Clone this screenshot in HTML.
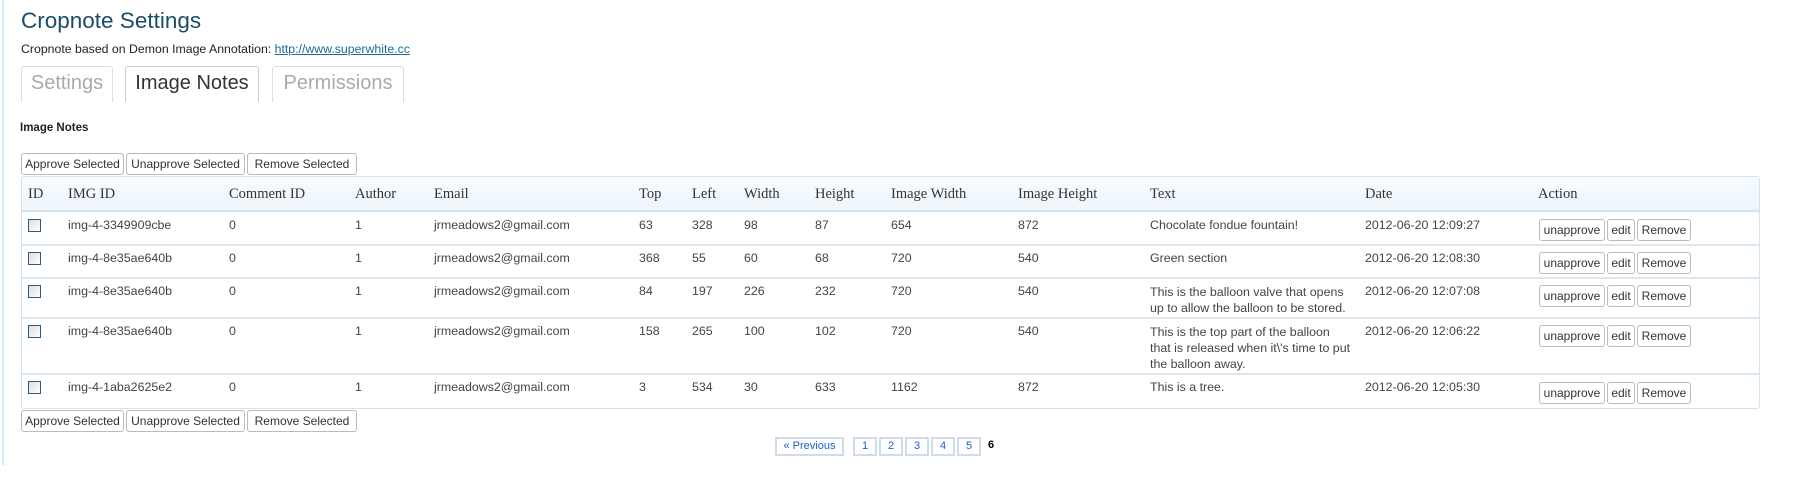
<!DOCTYPE html>
<html><head><meta charset="utf-8"><style>
*{margin:0;padding:0;box-sizing:border-box}
body{width:1800px;height:500px;background:#fff;position:relative;overflow:hidden;font-family:"Liberation Sans",Arial,sans-serif;color:#333}
.a{position:absolute;white-space:nowrap}
.lb{position:absolute;left:2px;top:0;width:2px;height:465px;background:#d8e8f3}
h1{position:absolute;left:21px;top:8px;font-size:22.5px;font-weight:normal;color:#1b4b68}
.sub{left:21px;top:42px;font-size:12.3px;color:#222}
.sub a{color:#1a6a9a;text-decoration:underline}
.tab{position:absolute;top:66px;height:36px;border:1px solid #ddd;border-bottom:none;border-radius:3px 3px 0 0;font-size:20px;text-align:center;line-height:33px;color:#aaa;background:#fff}
.btn{position:absolute;height:22px;border:1px solid #bbb;border-radius:3px;font-size:12px;line-height:20px;text-align:center;color:#333;background:#fff;white-space:nowrap}
.tbl{position:absolute;left:21px;top:176px;width:1739px;height:233px;border:1px solid #d3e3ee;border-radius:3px}
.hd{position:absolute;left:22px;top:177px;width:1737px;height:35px;background:linear-gradient(#f7fbfe,#eef6fc);border-bottom:2px solid #d3e3ee}
.hl{position:absolute;left:22px;width:1737px;height:2px;background:#dce8f0}
.h{position:absolute;top:186px;font-family:"Liberation Serif",serif;font-size:14.5px;color:#333;white-space:nowrap}
.c{position:absolute;font-size:12.4px;color:#444;white-space:nowrap;line-height:14px}
.cb{position:absolute;left:28px;width:13px;height:13px;border:1px solid #2b5a86;background:linear-gradient(135deg,#ddd,#fff)}
.pg{position:absolute;top:437px;height:19px;border:2px solid #d0dde8;font-size:11px;color:#1a5fcf;text-align:center;line-height:15px}
</style></head><body>
<div class="lb"></div>
<h1>Cropnote Settings</h1>
<div class="a sub">Cropnote based on Demon Image Annotation: <a>http://www.superwhite.cc</a></div>
<div class="tab" style="left:21px;width:92px">Settings</div>
<div class="tab" style="left:125px;width:134px;color:#333;border-color:#ccc">Image Notes</div>
<div class="tab" style="left:272px;width:132px">Permissions</div>
<div class="a" style="left:20px;top:122px;font-size:11.5px;font-weight:bold;color:#222">Image Notes</div>

<div class="btn" style="left:21px;top:153px;width:103px">Approve Selected</div>
<div class="btn" style="left:126px;top:153px;width:119px">Unapprove Selected</div>
<div class="btn" style="left:247px;top:153px;width:110px">Remove Selected</div>

<div class="tbl"></div>
<div class="hd"></div>
<div class="h" style="left:28px">ID</div>
<div class="h" style="left:68px">IMG ID</div>
<div class="h" style="left:229px">Comment ID</div>
<div class="h" style="left:355px">Author</div>
<div class="h" style="left:434px">Email</div>
<div class="h" style="left:639px">Top</div>
<div class="h" style="left:692px">Left</div>
<div class="h" style="left:744px">Width</div>
<div class="h" style="left:815px">Height</div>
<div class="h" style="left:891px">Image Width</div>
<div class="h" style="left:1018px">Image Height</div>
<div class="h" style="left:1150px">Text</div>
<div class="h" style="left:1365px">Date</div>
<div class="h" style="left:1538px">Action</div>

<div class="hl" style="top:244px"></div>
<div class="hl" style="top:277px"></div>
<div class="hl" style="top:317px"></div>
<div class="hl" style="top:373px"></div>

<div class="cb" style="top:219px"></div>
<div class="c" style="left:68px;top:218px">img-4-3349909cbe</div>
<div class="c" style="left:229px;top:218px">0</div><div class="c" style="left:355px;top:218px">1</div>
<div class="c" style="left:434px;top:218px">jrmeadows2@gmail.com</div>
<div class="c" style="left:639px;top:218px">63</div><div class="c" style="left:692px;top:218px">328</div>
<div class="c" style="left:744px;top:218px">98</div><div class="c" style="left:815px;top:218px">87</div>
<div class="c" style="left:891px;top:218px">654</div><div class="c" style="left:1018px;top:218px">872</div>
<div class="c" style="left:1150px;top:218px">Chocolate fondue fountain!</div>
<div class="c" style="left:1365px;top:218px">2012-06-20 12:09:27</div>
<div class="btn" style="left:1539px;top:219px;width:66px">unapprove</div><div class="btn" style="left:1607px;top:219px;width:28px">edit</div><div class="btn" style="left:1637px;top:219px;width:54px">Remove</div>

<div class="cb" style="top:252px"></div>
<div class="c" style="left:68px;top:251px">img-4-8e35ae640b</div>
<div class="c" style="left:229px;top:251px">0</div><div class="c" style="left:355px;top:251px">1</div>
<div class="c" style="left:434px;top:251px">jrmeadows2@gmail.com</div>
<div class="c" style="left:639px;top:251px">368</div><div class="c" style="left:692px;top:251px">55</div>
<div class="c" style="left:744px;top:251px">60</div><div class="c" style="left:815px;top:251px">68</div>
<div class="c" style="left:891px;top:251px">720</div><div class="c" style="left:1018px;top:251px">540</div>
<div class="c" style="left:1150px;top:251px">Green section</div>
<div class="c" style="left:1365px;top:251px">2012-06-20 12:08:30</div>
<div class="btn" style="left:1539px;top:252px;width:66px">unapprove</div><div class="btn" style="left:1607px;top:252px;width:28px">edit</div><div class="btn" style="left:1637px;top:252px;width:54px">Remove</div>

<div class="cb" style="top:285px"></div>
<div class="c" style="left:68px;top:284px">img-4-8e35ae640b</div>
<div class="c" style="left:229px;top:284px">0</div><div class="c" style="left:355px;top:284px">1</div>
<div class="c" style="left:434px;top:284px">jrmeadows2@gmail.com</div>
<div class="c" style="left:639px;top:284px">84</div><div class="c" style="left:692px;top:284px">197</div>
<div class="c" style="left:744px;top:284px">226</div><div class="c" style="left:815px;top:284px">232</div>
<div class="c" style="left:891px;top:284px">720</div><div class="c" style="left:1018px;top:284px">540</div>
<div class="c" style="left:1150px;top:284px;line-height:16px">This is the balloon valve that opens<br>up to allow the balloon to be stored.</div>
<div class="c" style="left:1365px;top:284px">2012-06-20 12:07:08</div>
<div class="btn" style="left:1539px;top:285px;width:66px">unapprove</div><div class="btn" style="left:1607px;top:285px;width:28px">edit</div><div class="btn" style="left:1637px;top:285px;width:54px">Remove</div>

<div class="cb" style="top:325px"></div>
<div class="c" style="left:68px;top:324px">img-4-8e35ae640b</div>
<div class="c" style="left:229px;top:324px">0</div><div class="c" style="left:355px;top:324px">1</div>
<div class="c" style="left:434px;top:324px">jrmeadows2@gmail.com</div>
<div class="c" style="left:639px;top:324px">158</div><div class="c" style="left:692px;top:324px">265</div>
<div class="c" style="left:744px;top:324px">100</div><div class="c" style="left:815px;top:324px">102</div>
<div class="c" style="left:891px;top:324px">720</div><div class="c" style="left:1018px;top:324px">540</div>
<div class="c" style="left:1150px;top:324px;line-height:16px">This is the top part of the balloon<br>that is released when it\'s time to put<br>the balloon away.</div>
<div class="c" style="left:1365px;top:324px">2012-06-20 12:06:22</div>
<div class="btn" style="left:1539px;top:325px;width:66px">unapprove</div><div class="btn" style="left:1607px;top:325px;width:28px">edit</div><div class="btn" style="left:1637px;top:325px;width:54px">Remove</div>

<div class="cb" style="top:381px"></div>
<div class="c" style="left:68px;top:380px">img-4-1aba2625e2</div>
<div class="c" style="left:229px;top:380px">0</div><div class="c" style="left:355px;top:380px">1</div>
<div class="c" style="left:434px;top:380px">jrmeadows2@gmail.com</div>
<div class="c" style="left:639px;top:380px">3</div><div class="c" style="left:692px;top:380px">534</div>
<div class="c" style="left:744px;top:380px">30</div><div class="c" style="left:815px;top:380px">633</div>
<div class="c" style="left:891px;top:380px">1162</div><div class="c" style="left:1018px;top:380px">872</div>
<div class="c" style="left:1150px;top:380px">This is a tree.</div>
<div class="c" style="left:1365px;top:380px">2012-06-20 12:05:30</div>
<div class="btn" style="left:1539px;top:382px;width:66px">unapprove</div><div class="btn" style="left:1607px;top:382px;width:28px">edit</div><div class="btn" style="left:1637px;top:382px;width:54px">Remove</div>

<div class="btn" style="left:21px;top:410px;width:103px">Approve Selected</div>
<div class="btn" style="left:126px;top:410px;width:119px">Unapprove Selected</div>
<div class="btn" style="left:247px;top:410px;width:110px">Remove Selected</div>

<div class="pg" style="left:775px;width:69px">« Previous</div>
<div class="pg" style="left:853px;width:24px">1</div>
<div class="pg" style="left:879px;width:24px">2</div>
<div class="pg" style="left:905px;width:24px">3</div>
<div class="pg" style="left:931px;width:24px">4</div>
<div class="pg" style="left:957px;width:24px">5</div>
<div class="a" style="left:988px;top:439px;font-size:11px;font-weight:bold;color:#000">6</div>
</body></html>
